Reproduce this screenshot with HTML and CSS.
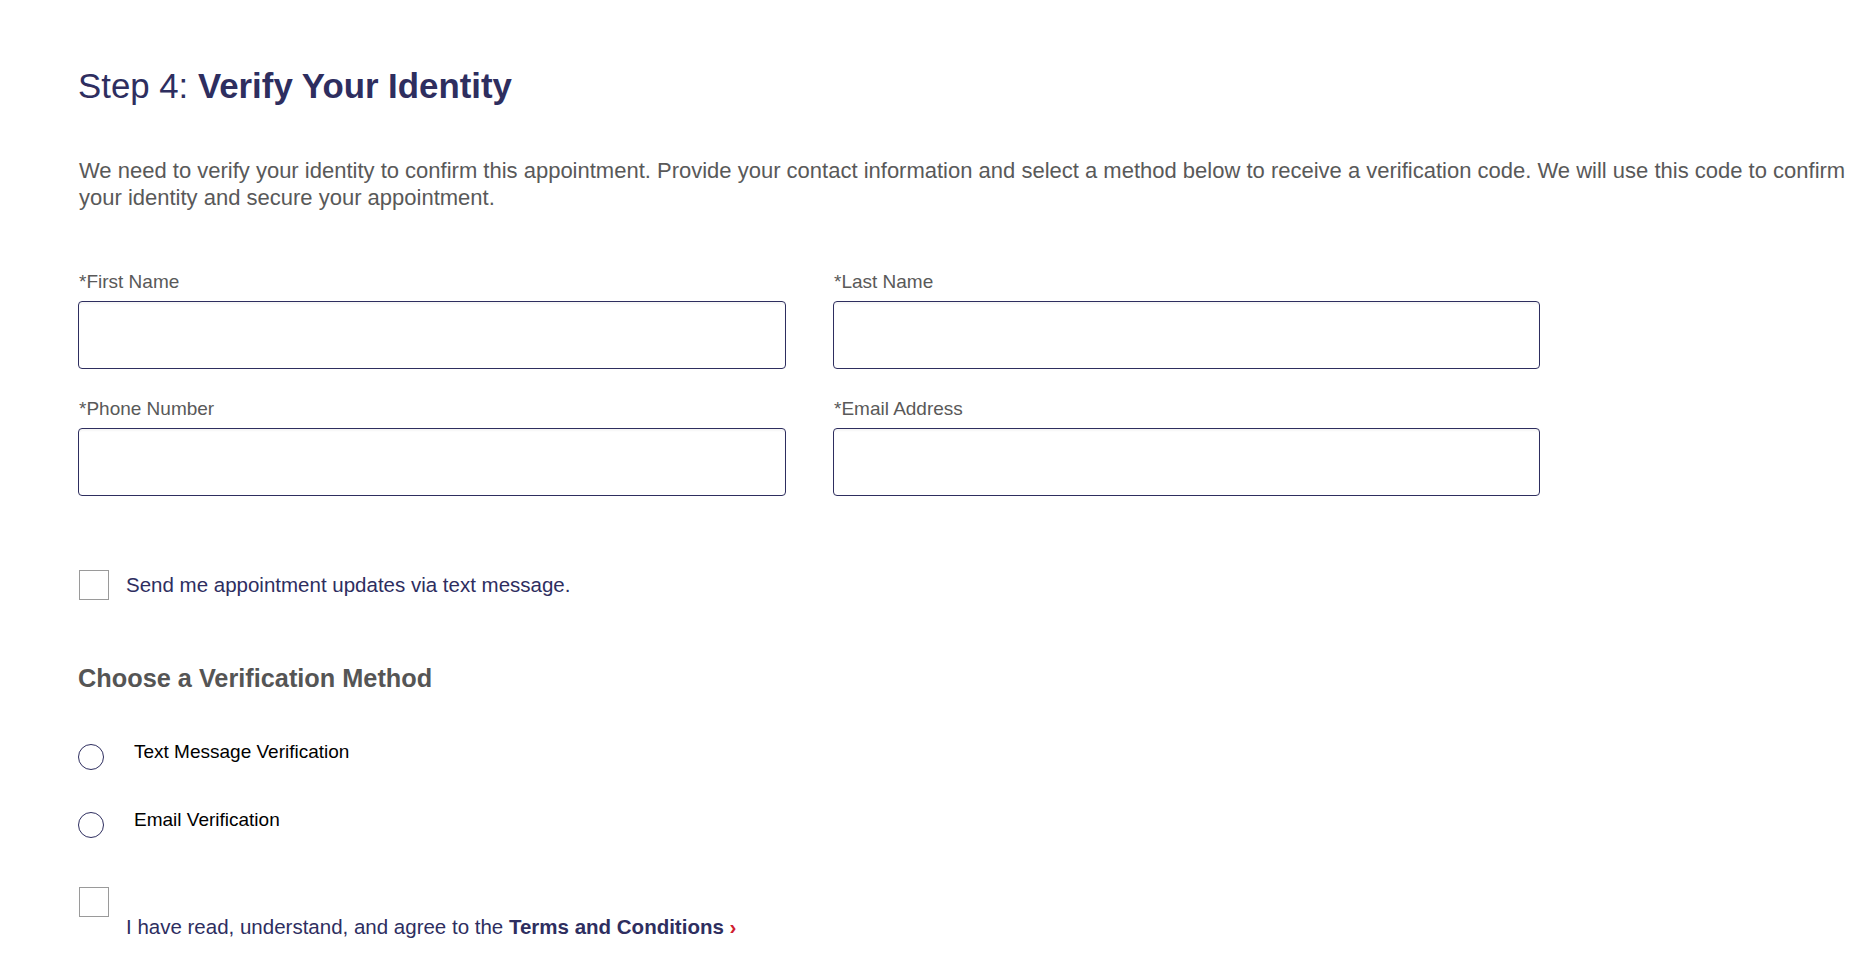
FILE: index.html
```html
<!DOCTYPE html>
<html lang="en">
<head>
<meta charset="utf-8">
<title>Step 4: Verify Your Identity</title>
<link rel="stylesheet" href="styles.css">
</head>
<body>
<main class="page">
  <h1 class="title">Step 4: <strong>Verify Your Identity</strong></h1>
  <p class="intro">We need to verify your identity to confirm this appointment. Provide your contact information and select a method below to receive a verification code. We will use this code to confirm your identity and secure your appointment.</p>

  <div class="fields">
    <div class="field">
      <label class="field-label" for="fn">*First Name</label>
      <input class="field-input" id="fn" type="text">
    </div>
    <div class="field">
      <label class="field-label" for="ln">*Last Name</label>
      <input class="field-input" id="ln" type="text">
    </div>
    <div class="field">
      <label class="field-label" for="ph">*Phone Number</label>
      <input class="field-input" id="ph" type="text">
    </div>
    <div class="field">
      <label class="field-label" for="em">*Email Address</label>
      <input class="field-input" id="em" type="text">
    </div>
  </div>

  <label class="check check-updates">
    <span class="box"></span>
    <span class="check-text">Send me appointment updates via text message.</span>
  </label>

  <h2 class="section-title">Choose a Verification Method</h2>

  <div class="radios">
    <label class="radio-row">
      <span class="radio"></span>
      <span class="radio-text">Text Message Verification</span>
    </label>
    <label class="radio-row">
      <span class="radio"></span>
      <span class="radio-text">Email Verification</span>
    </label>
  </div>

  <label class="check check-terms">
    <span class="box"></span>
    <span class="check-text terms-text">I have read, understand, and agree to the <strong>Terms and Conditions</strong> <span class="chev">&#8250;</span></span>
  </label>
</main>
</body>
</html>
```

FILE: styles.css
```css
html, body {
  margin: 0;
  padding: 0;
  background: #ffffff;
}

body {
  font-family: "Liberation Sans", Arial, Helvetica, sans-serif;
  color: #555555;
}

.page {
  padding: 66px 0 0 78px;
  width: 1782px;
}

.title {
  margin: 0;
  font-size: 34.8px;
  line-height: 39px;
  font-weight: 400;
  color: #2e2e5f;
}

.title strong {
  font-weight: 700;
}

.intro {
  margin: 53px 0 0 1px;
  font-size: 22px;
  line-height: 26.5px;
  color: #595959;
}

.fields {
  margin-top: 61px;
  display: grid;
  grid-template-columns: 708px 707px;
  column-gap: 47px;
  row-gap: 30px;
}

.field {
  display: flex;
  flex-direction: column;
}

.field-label {
  font-size: 19px;
  line-height: 20px;
  color: #595959;
  margin: 0 0 9px 1px;
}

.field-input {
  box-sizing: border-box;
  height: 68px;
  width: 100%;
  margin: 0;
  border: 1px solid #2e2e5f;
  border-radius: 4px;
  background: #fff;
  box-shadow: inset 0 2px 2px rgba(0, 0, 0, 0.04);
}

.check {
  display: flex;
  gap: 17px;
}

.check-updates {
  margin-top: 74px;
  align-items: center;
}

.box {
  box-sizing: border-box;
  flex: none;
  width: 30px;
  height: 30px;
  margin-left: 1px;
  border: 1px solid #9a9a9a;
  background: #fff;
}

.check-text {
  font-size: 20.5px;
  line-height: 22px;
  color: #2e2e5f;
}

.section-title {
  margin: 64px 0 0 0;
  font-size: 25.3px;
  line-height: 28px;
  font-weight: 700;
  color: #555555;
}

.radios {
  margin-top: 49px;
  display: flex;
  flex-direction: column;
  gap: 39px;
}

.radio-row {
  display: flex;
  align-items: flex-start;
  gap: 30px;
}

.radio {
  box-sizing: border-box;
  flex: none;
  width: 26px;
  height: 26px;
  margin-top: 3px;
  border: 1px solid #2e2e5f;
  border-radius: 50%;
  background: #fff;
}

.radio-text {
  font-size: 19px;
  line-height: 22px;
  color: #000;
}

.check-terms {
  margin-top: 49px;
  align-items: flex-start;
}

.terms-text {
  margin-top: 29px;
}

.terms-text strong {
  font-weight: 700;
}

.chev {
  color: #d0202e;
  font-weight: 700;
}
```
